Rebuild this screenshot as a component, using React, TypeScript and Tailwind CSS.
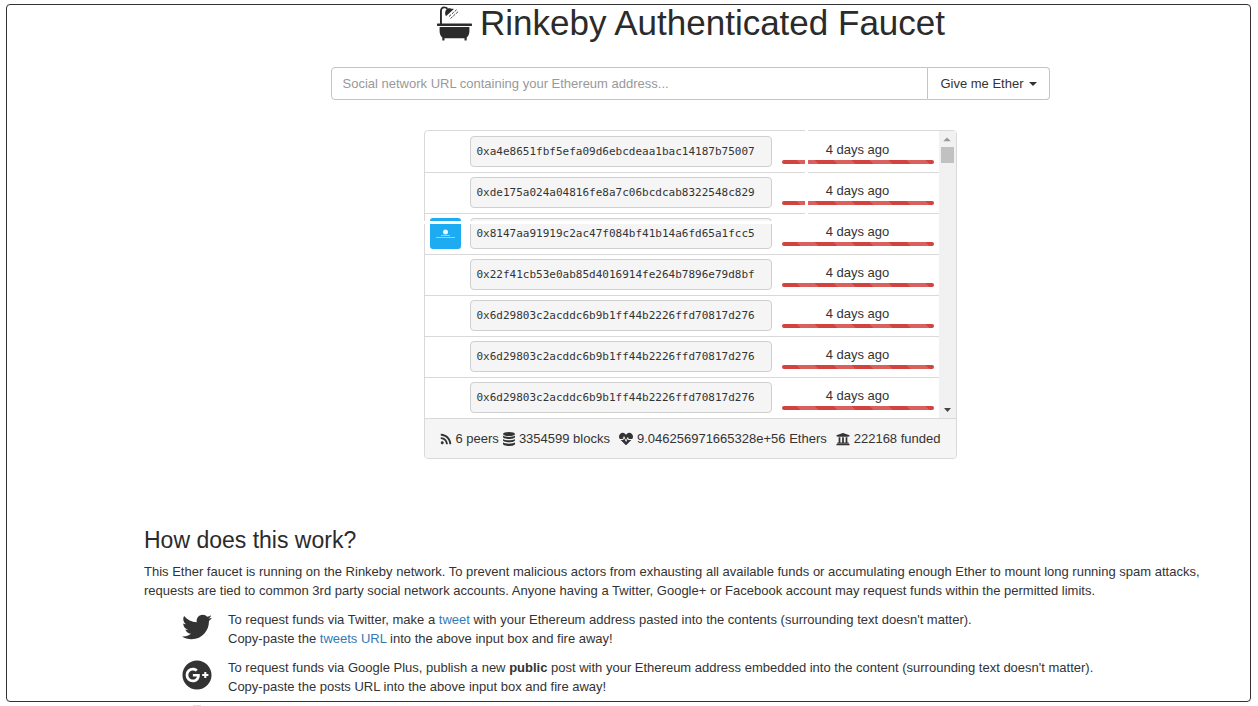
import type { ReactNode } from "react";
import { FaGooglePlus, FaHeartbeat, FaRss, FaTwitter, FaUniversity } from "react-icons/fa";

const requests = [
  { address: "0xa4e8651fbf5efa09d6ebcdeaa1bac14187b75007", avatar: false },
  { address: "0xde175a024a04816fe8a7c06bcdcab8322548c829", avatar: false },
  { address: "0x8147aa91919c2ac47f084bf41b14a6fd65a1fcc5", avatar: true },
  { address: "0x22f41cb53e0ab85d4016914fe264b7896e79d8bf", avatar: false },
  { address: "0x6d29803c2acddc6b9b1ff44b2226ffd70817d276", avatar: false },
  { address: "0x6d29803c2acddc6b9b1ff44b2226ffd70817d276", avatar: false },
  { address: "0x6d29803c2acddc6b9b1ff44b2226ffd70817d276", avatar: false },
];

function BathIcon() {
  return (
    <svg viewBox="0 0 35 35" className="h-[35px] w-[35px] shrink-0" fill="currentColor" aria-hidden="true">
      <path d="M3 18V5C3 2.200 4.800.400 7.200.400c1.700 0 3 .7 3.900 1.900L9.700 3.600C9.100 2.700 8.300 2.200 7.200 2.200 5.700 2.200 4.900 3.300 4.900 5v13z" />
      <path d="M8.400 9.300C7.600 6.200 8.600 3.600 10.800 2.600c1.400-.6 3.100-.4 4.300.3l.9-.5.7.9-7.500 6.600z" />
      <path
        d="M12 10.500l2-1.800M14.800 8l2-1.800M17.600 5.500l2-1.800M13.500 12.500l2-1.800M16.300 10l2-1.800M19.100 7.500l2-1.800"
        stroke="currentColor"
        strokeWidth=".9"
        fill="none"
      />
      <rect x="0" y="17.600" width="35" height="2.300" rx=".6" />
      <path d="M2.600 21h29.800v4c0 3-.9 5-2.700 6.400V34a.6.600 0 0 1-.6.600h-1a.6.600 0 0 1-.6-.6v-1.800H7.500V34a.6.600 0 0 1-.6.600h-1a.6.600 0 0 1-.6-.6v-2.600C3.500 30 2.600 28 2.600 25z" />
    </svg>
  );
}

function DatabaseIcon() {
  return (
    <svg viewBox="0 0 12 14" className="h-[14px] w-[12px] shrink-0" fill="currentColor" aria-hidden="true">
      <ellipse cx="6" cy="2" rx="6" ry="2" />
      <path d="M0 3.600C1.200 4.600 3.500 5 6 5s4.800-.4 6-1.400V5c0 1.100-2.700 2-6 2S0 6.100 0 5z" />
      <path d="M0 6.900C1.200 7.900 3.500 8.300 6 8.300s4.800-.4 6-1.400v1.400c0 1.100-2.700 2-6 2s-6-.9-6-2z" />
      <path d="M0 10.300c1.200 1 3.500 1.400 6 1.400s4.800-.4 6-1.400V12c0 1.100-2.700 2-6 2s-6-.9-6-2z" />
    </svg>
  );
}

function Avatar() {
  return (
    <svg viewBox="0 0 31 31" className="block h-[31px] w-[31px]" aria-hidden="true">
      <rect width="31" height="31" rx="3" fill="#1dabf2" />
      <circle cx="15.500" cy="14" r="2.500" fill="#e8f7fe" />
      <path d="M6 19.500h19M11 17.500h9" stroke="#8fd5f8" strokeWidth="1" />
    </svg>
  );
}

function Row({ address, avatar }: { address: string; avatar: boolean }) {
  return (
    <tr className="h-[41px] border-b border-[#d9d9d9] last:border-b-0">
      <td className="pl-[5px]">{avatar && <Avatar />}</td>
      <td>
        <div className="flex h-[31px] items-center rounded border border-[#cfcfcf] bg-[#f5f5f5] px-1.5 font-['DejaVu_Sans_Mono',monospace] text-[11px]">
          {address}
        </div>
      </td>
      <td className="pr-[5px] pl-2.5 text-center">
        <div className="leading-[21px]">4 days ago</div>
        <div className="h-1 rounded-full bg-[#d2423e] bg-[repeating-linear-gradient(45deg,transparent_0_13px,#d9605c_13px_26px)]" />
      </td>
    </tr>
  );
}

function Guide({ icon, children }: { icon: ReactNode; children: ReactNode }) {
  return (
    <div className="mt-2.5 flex items-start">
      <div className="flex w-[84px] shrink-0 justify-center pt-0.5 pl-[22px] text-[30px]">{icon}</div>
      <p>{children}</p>
    </div>
  );
}

export default function App() {
  return (
    <div className="bg-white pt-1 pr-[7px] pl-1.5 font-['Liberation_Sans',Arial,sans-serif] text-[13px] leading-[19px] text-[#333]">
      <main className="rounded-[4px] border border-[#333] pb-[5px]">
        <h1 className="flex h-9 items-center justify-center gap-2 pl-[125px] text-[35px] leading-9 text-[#2b2b2b]">
          <BathIcon />
          <span>Rinkeby Authenticated Faucet</span>
        </h1>

        <div className="pr-3.5 pl-[137px]">
          <form className="mx-auto mt-[26px] flex h-[33px] w-full max-w-[719px]" onSubmit={(e) => e.preventDefault()}>
            <input
              type="text"
              aria-label="Social network URL"
              placeholder="Social network URL containing your Ethereum address..."
              className="min-w-0 flex-1 rounded-l border border-[#c4c4c4] px-[11px] placeholder:text-[#999] focus:outline-none"
            />
            <button type="button" className="flex items-center gap-[5px] rounded-r border border-l-0 border-[#c4c4c4] px-3">
              Give me Ether
              <svg viewBox="0 0 8 4" className="h-1 w-2" fill="currentColor" aria-hidden="true">
                <path d="M0 0h8L4 4z" />
              </svg>
            </button>
          </form>

          <section className="relative mx-auto mt-[30px] w-full max-w-[533px] rounded border border-[#d9d9d9]">
            <div className="flex h-[287px] overflow-hidden">
              <table className="flex-1 table-fixed border-collapse">
                <colgroup>
                  <col className="w-[45px]" />
                  <col className="w-[302px]" />
                  <col />
                </colgroup>
                <tbody>
                  {requests.map((request, i) => (
                    <Row key={i} {...request} />
                  ))}
                </tbody>
              </table>
              <div className="flex w-[17px] flex-col items-center bg-[#f1f1f1]" aria-hidden="true">
                <svg viewBox="0 0 17 17" className="h-4 w-4" fill="#999">
                  <path d="M4.500 11l4-4 4 4z" />
                </svg>
                <div className="h-4 w-[13px] bg-[#c1c1c1]" />
                <svg viewBox="0 0 17 17" className="mt-auto h-[17px] w-[17px]" fill="#444">
                  <path d="M5 7h7l-3.500 4z" />
                </svg>
              </div>
            </div>
            <footer className="flex h-10 items-center justify-between rounded-b border-t border-[#d9d9d9] bg-[#f5f5f5] px-[15px] whitespace-nowrap">
              <span className="flex items-center gap-1">
                <FaRss className="h-3 w-3" />
                6 peers
                <DatabaseIcon />
                3354599 blocks
              </span>
              <span className="flex items-center gap-1">
                <FaHeartbeat className="h-3.5 w-3.5" />
                9.046256971665328e+56 Ethers
              </span>
              <span className="flex items-center gap-1">
                <FaUniversity className="h-3.5 w-3.5" />
                222168 funded
              </span>
            </footer>
            <div className="absolute -top-px left-[380px] h-[84px] w-[3px] bg-white" />
            <div className="absolute top-[90px] -left-px h-[3px] w-[349px] bg-white" />
          </section>

          <section className="mt-[67px]">
            <h2 className="text-[23px] leading-7 text-[#2b2b2b]">How does this work?</h2>
            <p className="mt-2">
              This Ether faucet is running on the Rinkeby network. To prevent malicious actors from exhausting all available funds or
              accumulating enough Ether to mount long running spam attacks,
              <br />
              requests are tied to common 3rd party social network accounts. Anyone having a Twitter, Google+ or Facebook account may
              request funds within the permitted limits.
            </p>
            <Guide icon={<FaTwitter />}>
              To request funds via Twitter, make a <a href="#tweet" className="text-[#337ab7]">tweet</a> with your Ethereum address
              pasted into the contents (surrounding text doesn't matter).
              <br />
              Copy-paste the <a href="#tweets-url" className="text-[#337ab7]">tweets URL</a> into the above input box and fire away!
            </Guide>
            <Guide icon={<FaGooglePlus />}>
              To request funds via Google Plus, publish a new <strong>public</strong> post with your Ethereum address embedded into the
              content (surrounding text doesn't matter).
              <br />
              Copy-paste the posts URL into the above input box and fire away!
            </Guide>
          </section>
        </div>
      </main>
      <div className="mt-[3px] ml-[187px] h-px w-2 bg-[#ddd]" />
    </div>
  );
}
